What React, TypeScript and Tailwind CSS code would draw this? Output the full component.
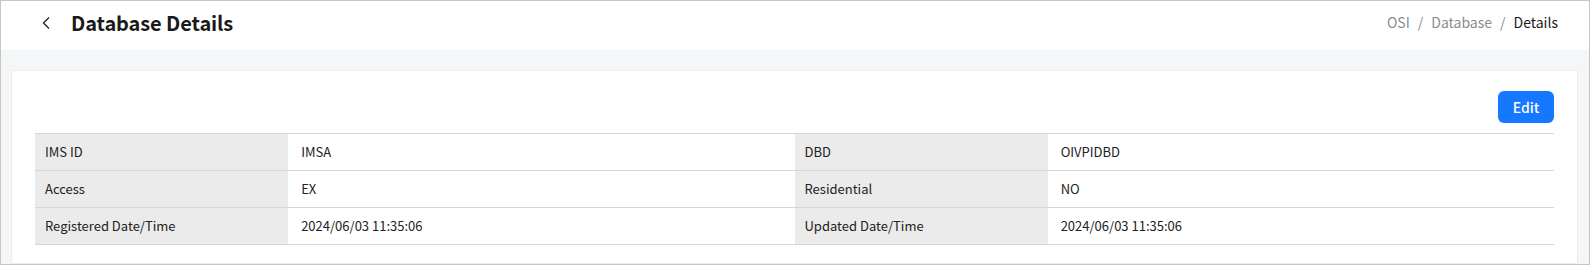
const FONT = "font-['Noto_Sans_CJK_KR','Noto_Sans',sans-serif]";

const rows = [
  ["IMS ID", "IMSA", "DBD", "OIVPIDBD"],
  ["Access", "EX", "Residential", "NO"],
  ["Registered Date/Time", "2024/06/03 11:35:06", "Updated Date/Time", "2024/06/03 11:35:06"],
];

function Chevron() {
  return (
    <svg width="10" height="14" viewBox="0 0 10 14" fill="none" className="text-[#222]">
      <path d="M8 1.5 L2.5 7 L8 12.5" stroke="currentColor" strokeWidth="1.3" />
    </svg>
  );
}

export default function App() {
  return (
    <div className={`${FONT} w-[1590px] h-[265px] border border-[#c6c6c6] bg-[#f5f6f8] overflow-hidden flex flex-col`}>
      <header className="h-[49px] shrink-0 bg-white flex items-center justify-between pl-[40px] pr-[31px] pb-[6px]">
        <div className="flex items-center gap-[20px]">
          <Chevron />
          <h1 className="text-[20px] font-bold text-[#1a1a1a] tracking-[-0.1px]">Database Details</h1>
        </div>
        <nav className="flex items-center gap-[8px] text-[14px] text-[#8c8c8c]">
          <span>OSI</span>
          <span>/</span>
          <span>Database</span>
          <span>/</span>
          <span className="text-[#1a1a1a]">Details</span>
        </nav>
      </header>
      <main className="flex-1 pt-[20px] pl-[10px] pr-[11px]">
        <section className="h-full bg-white border border-[#ececec] rounded-t-[2px] pt-[20px] px-[23px]">
          <div className="flex justify-end">
            <button className="h-[32px] w-[56px] rounded-[6px] bg-[#1677ff] text-white text-[14px] font-medium">
              Edit
            </button>
          </div>
          <div className="mt-[10px] border-b border-[#d6d6d6] text-[13px] text-[#222]">
            {rows.map((r) => (
              <div key={r[0]} className="grid grid-cols-[1fr_2fr_1fr_2fr] h-[37px] border-t border-[#d6d6d6]">
                <div className="bg-[#ebebeb] flex items-center pl-[10px]">{r[0]}</div>
                <div className="flex items-center pl-[13px]">{r[1]}</div>
                <div className="bg-[#ebebeb] flex items-center pl-[10px]">{r[2]}</div>
                <div className="flex items-center pl-[13px]">{r[3]}</div>
              </div>
            ))}
          </div>
        </section>
      </main>
    </div>
  );
}
